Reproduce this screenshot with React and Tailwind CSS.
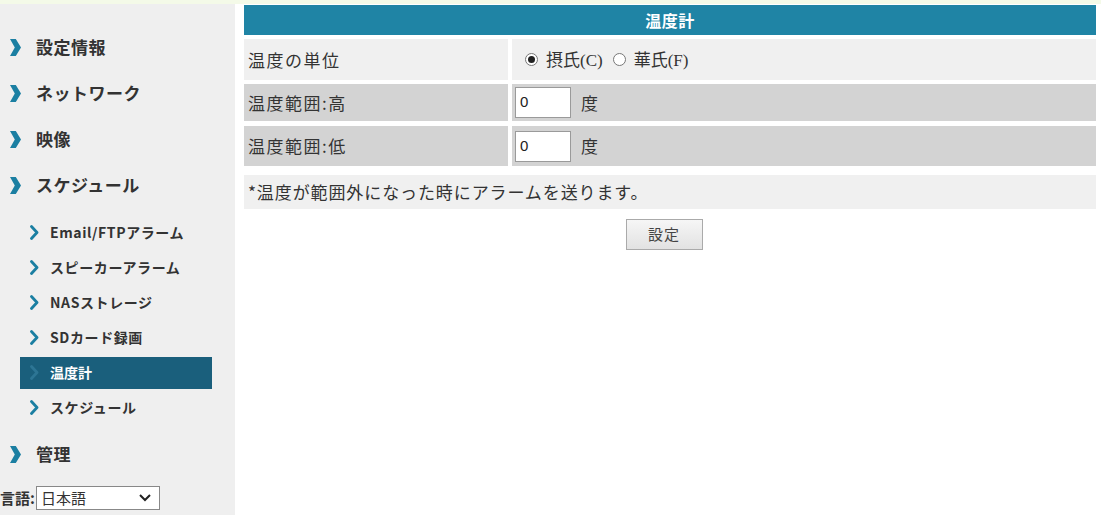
import React from "react";

const font = { fontFamily: '"Noto Sans CJK JP", "Noto Sans", sans-serif' };

function BigChevron() {
  return (
    <svg width="11" height="17" viewBox="0 0 11 17" className="shrink-0">
      <polygon points="0,0 5.8,0 11,8.5 5.8,17 0,17 4.8,8.5" fill="#1b7fa2" />
    </svg>
  );
}

function SmallChevron({ color = "#1b7fa2" }) {
  return (
    <svg width="9" height="15" viewBox="0 0 9 15" className="shrink-0">
      <polyline points="1.5,1.5 7,7.5 1.5,13.5" fill="none" stroke={color} strokeWidth="2.8" strokeLinejoin="round" strokeLinecap="round" />
    </svg>
  );
}

function MainItem({ label, className = "" }) {
  return (
    <div className={"h-[46px] flex items-center pl-[10px] gap-[15px] " + className}>
      <BigChevron />
      <span className="text-[17px] font-bold text-[#333] tracking-[0.5px]">{label}</span>
    </div>
  );
}

function SubItem({ label, active }) {
  if (active) {
    return (
      <div className="h-[35px] flex items-center">
        <div className="ml-[20px] w-[192px] h-[32px] bg-[#1a5f7c] flex items-center pl-[10px] gap-[11px]">
          <SmallChevron color="#2d7594" />
          <span className="text-[14px] font-bold text-white">{label}</span>
        </div>
      </div>
    );
  }
  return (
    <div className="h-[35px] flex items-center pl-[30px] gap-[11px]">
      <SmallChevron />
      <span className="text-[14px] font-bold text-[#333] tracking-[0.6px]">{label}</span>
    </div>
  );
}

function Radio({ checked }) {
  return (
    <span className="w-[13px] h-[13px] rounded-full border border-[#777] bg-white flex items-center justify-center shrink-0">
      {checked && <span className="w-[7px] h-[7px] rounded-full bg-[#222]" />}
    </span>
  );
}

function NumInput() {
  return (
    <div className="w-[56px] h-[31px] bg-white border border-[#9a9a9a] flex items-center pl-[4px] text-[15px] text-[#222]" style={{ fontFamily: '"Liberation Sans", Arial, sans-serif' }}>
      0
    </div>
  );
}

const serif = { fontFamily: '"Liberation Serif", serif' };

export default function App() {
  return (
    <div className="w-[1101px] h-[515px] bg-white overflow-hidden" style={font}>
      <div className="h-[4px] bg-[#f4fae8]" />
      <div className="flex">
        <div className="w-[235px] h-[511px] bg-[#efefef] pt-[20px] shrink-0">
          <MainItem label="設定情報" />
          <MainItem label="ネットワーク" />
          <MainItem label="映像" />
          <MainItem label="スケジュール" />
          <div className="mt-[7px]">
            <SubItem label="Email/FTPアラーム" />
            <SubItem label="スピーカーアラーム" />
            <SubItem label="NASストレージ" />
            <SubItem label="SDカード録画" />
            <SubItem label="温度計" active />
            <SubItem label="スケジュール" />
          </div>
          <MainItem label="管理" className="mt-[6px]" />
          <div className="mt-[9px] flex items-center h-[24px]">
            <span className="text-[15px] font-bold text-[#333]">言語:</span>
            <div className="ml-[1px] w-[124px] h-[24px] bg-white border border-[#888] flex items-center justify-between pl-[4px] pr-[8px]">
              <span className="text-[15px] text-[#333]">日本語</span>
              <svg width="12" height="8" viewBox="0 0 12 8">
                <polyline points="1,1 6,6 11,1" fill="none" stroke="#222" strokeWidth="2" />
              </svg>
            </div>
          </div>
        </div>

        <div className="ml-[9px] w-[852px] pt-[1px]">
          <div className="h-[30px] bg-[#1f84a5] flex items-center justify-center">
            <span className="text-[16px] font-bold text-white tracking-[0.5px]">温度計</span>
          </div>
          <div className="mt-[4px] flex gap-[4px] h-[41px]">
            <div className="w-[264px] bg-[#f0f0f0] flex items-center pl-[4px] text-[17px] text-[#333] tracking-[1.5px]">温度の単位</div>
            <div className="flex-1 bg-[#f0f0f0] flex items-center pl-[13px] text-[17px] text-[#333]">
              <Radio checked />
              <span className="ml-[8px]">摂氏<span style={serif}>(C)</span></span>
              <span className="ml-[10px]"><Radio /></span>
              <span className="ml-[8px]">華氏<span style={serif}>(F)</span></span>
            </div>
          </div>
          <div className="mt-[4px] flex gap-[4px] h-[37px]">
            <div className="w-[264px] bg-[#d3d3d3] flex items-center pl-[4px] text-[17px] text-[#333] tracking-[1.5px]">温度範囲:高</div>
            <div className="flex-1 bg-[#d3d3d3] flex items-center pl-[3px] gap-[10px] text-[17px] text-[#333]">
              <NumInput />
              <span>度</span>
            </div>
          </div>
          <div className="mt-[5px] flex gap-[4px] h-[40px]">
            <div className="w-[264px] bg-[#d3d3d3] flex items-center pl-[4px] text-[17px] text-[#333] tracking-[1.5px]">温度範囲:低</div>
            <div className="flex-1 bg-[#d3d3d3] flex items-center pl-[3px] gap-[10px] text-[17px] text-[#333]">
              <NumInput />
              <span>度</span>
            </div>
          </div>
          <div className="mt-[9px] h-[34px] bg-[#f0f0f0] flex items-center pl-[4px] text-[17px] text-[#333] tracking-[0.9px]">
            *温度が範囲外になった時にアラームを送ります。
          </div>
          <div className="mt-[10px] flex justify-center pr-[12px]">
            <button className="w-[77px] h-[31px] border border-[#aaa] bg-gradient-to-b from-[#f6f6f6] to-[#e2e2e2] text-[15px] text-[#444] tracking-[1px]" style={font}>
              設定
            </button>
          </div>
        </div>
      </div>
    </div>
  );
}
